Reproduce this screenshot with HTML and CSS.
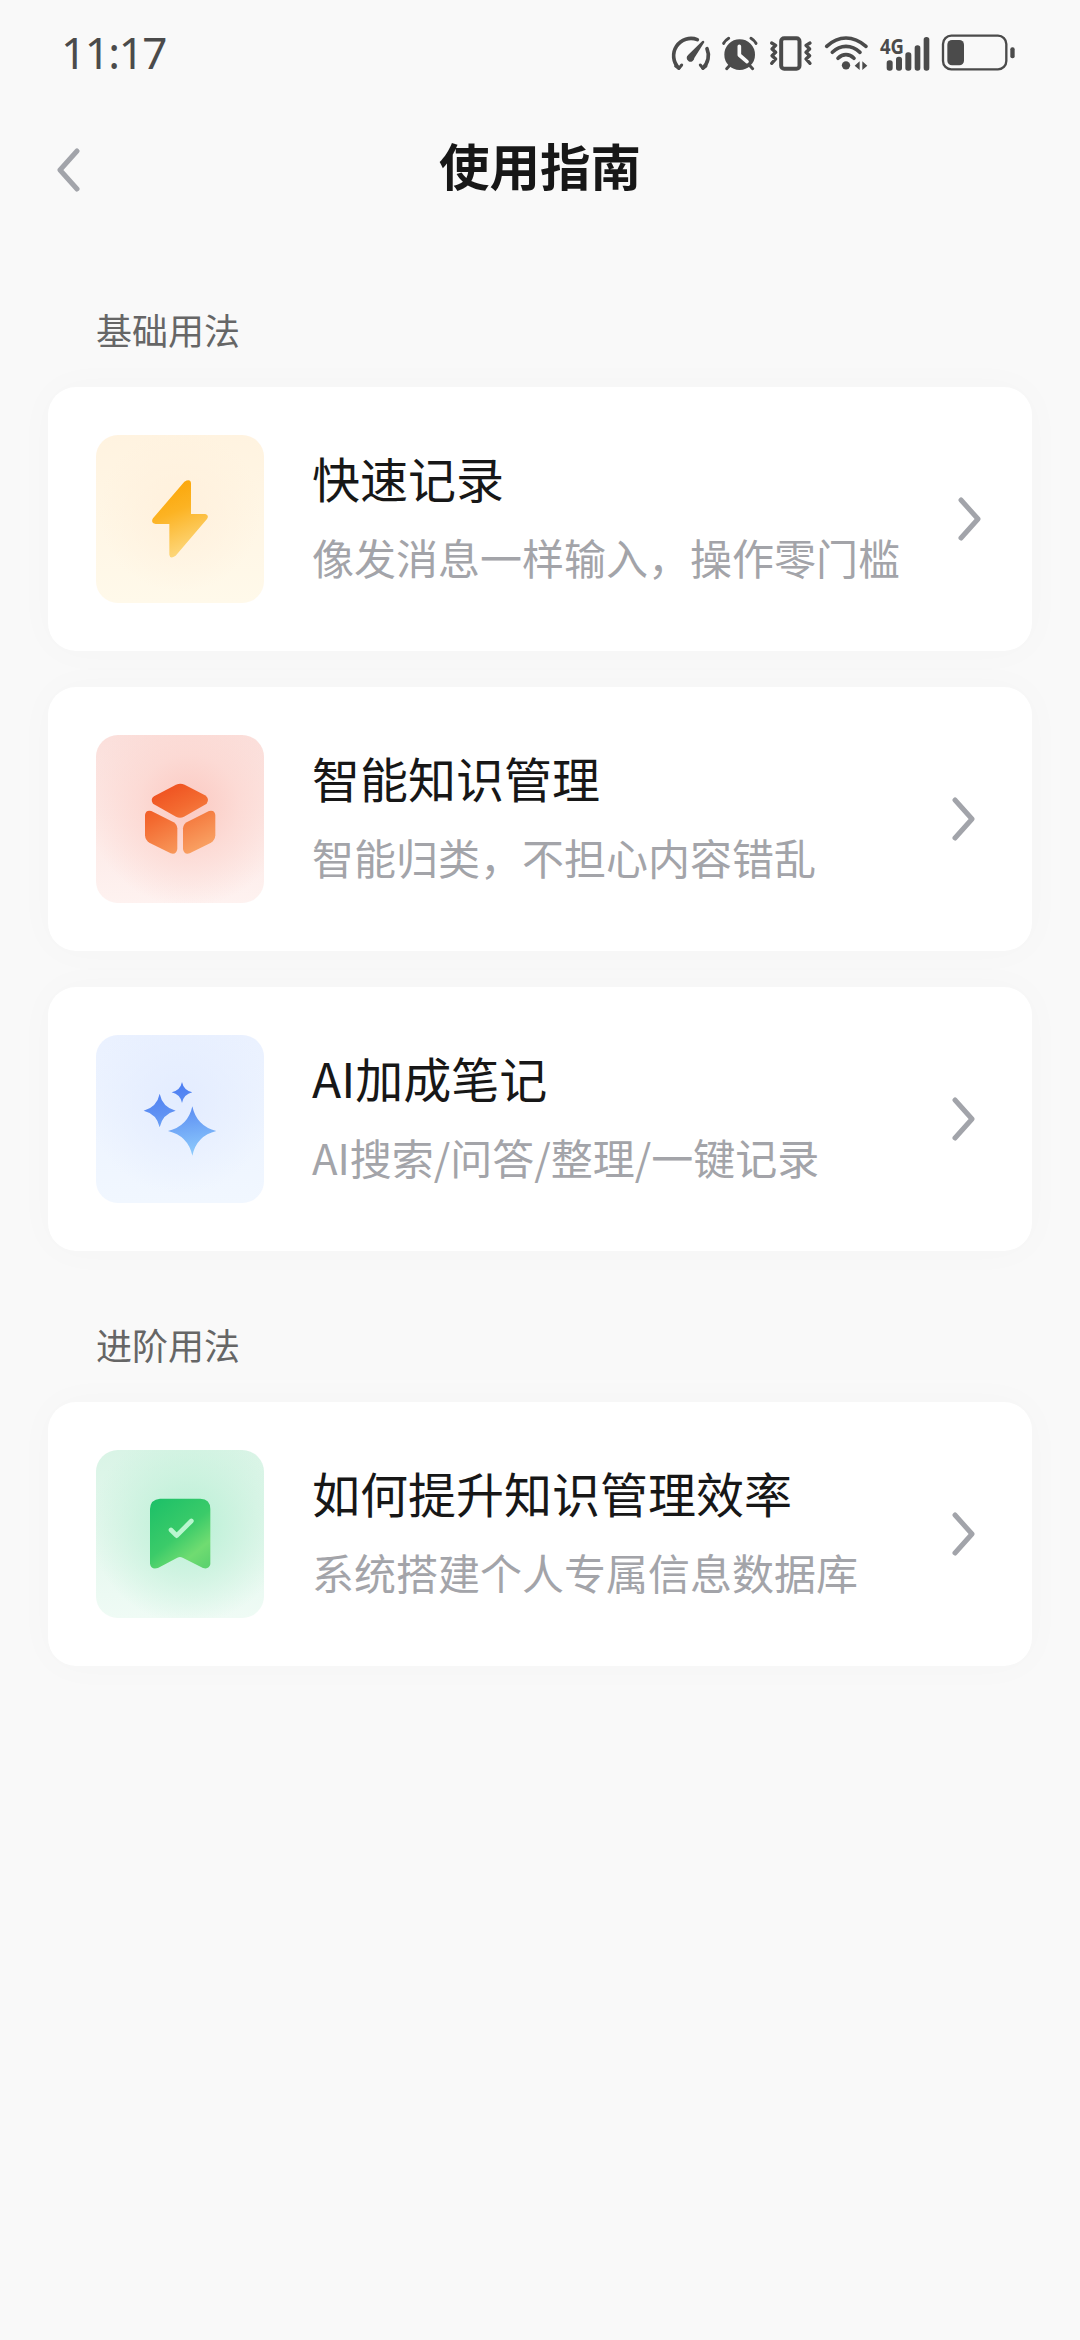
FILE: index.html
```html
<!DOCTYPE html>
<html lang="zh-CN">
<head>
<meta charset="utf-8">
<title>使用指南</title>
<link rel="stylesheet" href="styles.css">
</head>
<body>
<div class="status">
  <span class="time">11:17</span>
  <div class="status-icons">
    <svg class="i-gauge" viewBox="30 42 126 110" fill="none" stroke="#4b4b4b" stroke-width="11" stroke-linecap="round" stroke-linejoin="round">
      <path d="M56 141A52 52 0 0 1 112 56M141 83A52 52 0 0 1 129 141"/>
      <path d="M47 135L57 142L65 132M121 132L129 142L138 135" stroke-width="9"/>
      <path d="M127 60Q133 57 133 64L103 111A11.500 11.500 0 1 1 85 101Z" fill="#4b4b4b" stroke="none"/>
    </svg>
    <svg class="i-alarm" viewBox="184 42 112 110" fill="none" stroke="#4b4b4b" stroke-width="9" stroke-linecap="round">
      <circle cx="240" cy="101" r="46" fill="#4b4b4b" stroke="none"/>
      <path d="M192 67Q197 58 207 52M274 52Q284 58 289 67M201 143L212 131M279 143L268 131"/>
      <path d="M239 76V102L262 122" stroke="#fafafa" stroke-width="11" stroke-linejoin="round"/>
    </svg>
    <svg class="i-vibrate" viewBox="328 42 132 110" fill="none" stroke="#4b4b4b" stroke-width="10" stroke-linecap="round" stroke-linejoin="round">
      <rect x="364.500" y="51.500" width="55" height="92" rx="9" stroke-width="12"/>
      <path d="M336 66L348 73L337 84L348 94L337 104L348 114L336 127M451 66L439 73L450 84L439 94L450 104L439 114L451 127"/>
    </svg>
    <svg class="i-wifi" viewBox="492 40 134 110" fill="none" stroke="#4b4b4b" stroke-width="11" stroke-linecap="round">
      <path d="M500 74Q527 49 558 49T618 74M517 92Q535 74 558 74T600 92M534 110Q545 99 558 99T582 110"/>
      <circle cx="558" cy="131" r="12.500" fill="#4b4b4b" stroke="none"/>
      <path d="M584 132L599 119V145ZM607 119L622 132L607 145Z" fill="#4b4b4b" stroke="none"/>
    </svg>
    <svg class="i-signal" viewBox="88 38 156 110" fill="#4b4b4b">
      <text class="net" x="91" y="94" textLength="72" lengthAdjust="spacingAndGlyphs">4G</text>
      <rect x="111" y="114" width="18" height="31" rx="8"/>
      <rect x="139" y="103" width="18" height="42" rx="8"/>
      <rect x="167" y="90" width="18" height="55" rx="8"/>
      <rect x="195" y="69" width="17" height="76" rx="8"/>
      <rect x="222" y="44" width="17" height="101" rx="8"/>
    </svg>
    <svg class="i-battery" viewBox="274 38 224 112" fill="#4b4b4b">
      <rect x="280" y="43" width="190" height="101" rx="25" fill="none" stroke="#4b4b4b" stroke-width="7"/>
      <rect x="293" y="56" width="50" height="76" rx="14"/>
      <rect x="482" y="78" width="13" height="33" rx="6"/>
    </svg>
  </div>
</div>

<header class="nav">
  <svg class="back" viewBox="0 0 24 44"><path d="M21 3L4 22L21 41"/></svg>
  <h1>使用指南</h1>
</header>

<main>
  <h2>基础用法</h2>
  <section class="list">
    <div class="card card-wide">
      <svg class="tile tile-yellow" viewBox="168 435 504 504">
        <defs><linearGradient id="bolt" x1=".3" y1="0" x2=".6" y2="1"><stop offset="0" stop-color="#fba506"/><stop offset=".4" stop-color="#fcb323"/><stop offset="1" stop-color="#fddb85"/></linearGradient></defs>
        <path d="M433 575Q452 565 453 580V672H496Q508 675 501 687L407 797Q390 809 388 794V702H347Q331 698 339 685Z" fill="url(#bolt)"/>
      </svg>
      <div class="copy"><h3>快速记录</h3><p>像发消息一样输入，操作零门槛</p></div>
      <svg class="go" viewBox="0 0 24 44"><path d="M3 3L20 22L3 41"/></svg>
    </div>
    <div class="card">
      <svg class="tile tile-red" viewBox="48 45 504 504">
        <defs><linearGradient id="cube" gradientUnits="userSpaceOnUse" x1="250" y1="200" x2="350" y2="400"><stop offset="0" stop-color="#ef5120"/><stop offset=".35" stop-color="#f36a30"/><stop offset="1" stop-color="#f9a365"/></linearGradient></defs>
        <g fill="url(#cube)">
          <path d="M288 194Q301 188 314 194L375 226Q390 236 380 251L312 290Q300 296 288 290L219 251Q210 238 222 229Z"/>
          <path d="M195 285Q197 269 214 273L281 307Q291 313 292 325V387Q289 405 272 400L208 368Q196 361 195 346Z"/>
          <path d="M406 285Q404 269 387 273L320 307Q310 313 309 325V387Q312 405 329 400L393 368Q405 361 406 346Z"/>
        </g>
      </svg>
      <div class="copy"><h3>智能知识管理</h3><p>智能归类，不担心内容错乱</p></div>
      <svg class="go" viewBox="0 0 24 44"><path d="M3 3L20 22L3 41"/></svg>
    </div>
    <div class="card">
      <svg class="tile tile-blue" viewBox="48 45 504 504">
        <defs><linearGradient id="star" gradientUnits="userSpaceOnUse" x1="290" y1="190" x2="320" y2="405"><stop offset="0" stop-color="#4c7df2"/><stop offset=".4" stop-color="#6092f3"/><stop offset="1" stop-color="#8ccafc"/></linearGradient></defs>
        <g fill="url(#star)">
          <path d="M306 186Q311 211 337 217Q311 223 306 249Q301 223 275 217Q301 211 306 186Z"/>
          <path d="M239 221Q247 261 287 272Q247 282 239 322Q231 282 191 272Q231 261 239 221Z"/>
          <path d="M337 259Q350 319 409 333Q350 347 337 407Q324 347 264 333Q324 319 337 259Z"/>
        </g>
      </svg>
      <div class="copy"><h3>AI加成笔记</h3><p>AI搜索/问答/整理/一键记录</p></div>
      <svg class="go" viewBox="0 0 24 44"><path d="M3 3L20 22L3 41"/></svg>
    </div>
  </section>
  <h2>进阶用法</h2>
  <section class="list">
    <div class="card">
      <svg class="tile tile-green" viewBox="48 30 504 504">
        <defs><linearGradient id="mark" x1=".15" y1="0" x2=".85" y2="1"><stop offset="0" stop-color="#1fc168"/><stop offset=".5" stop-color="#3bcb69"/><stop offset=".8" stop-color="#70dc71"/><stop offset="1" stop-color="#5ed36e"/></linearGradient></defs>
        <path d="M240 176H361Q391 177 391 207V373Q387 389 369 384L308 353Q300 349 292 353L234 384Q213 390 210 371V207Q211 178 240 176Z" fill="url(#mark)"/>
        <path d="M273 270L290 287L334 243" fill="none" stroke="#b9f6cf" stroke-width="14" stroke-linecap="round" stroke-linejoin="round"/>
      </svg>
      <div class="copy"><h3>如何提升知识管理效率</h3><p>系统搭建个人专属信息数据库</p></div>
      <svg class="go" viewBox="0 0 24 44"><path d="M3 3L20 22L3 41"/></svg>
    </div>
  </section>
</main>
</body>
</html>
```
FILE: styles.css
```css
* { box-sizing: border-box; }
body {
  margin: 0;
  min-height: 2340px;
  background: #f9f9f9;
  color: #171717;
  font-family: "Noto Sans CJK SC", sans-serif;
}
h1, h2, h3, p { margin: 0; }
svg { display: block; flex: none; }

.status {
  height: 107px;
  display: flex;
  justify-content: space-between;
  align-items: center;
  padding: 0 64px 1px 61px;
}
.time {
  font: 400 44px/60px "Noto Sans", "Noto Sans CJK SC", sans-serif;
  color: #4b4b4b;
  letter-spacing: -1.5px;
  padding-bottom: 2px;
}
.status-icons { display: flex; align-items: center; }
.i-gauge { width: 42px; height: 36.67px; margin-right: 9.3px; }
.i-alarm { width: 37.33px; height: 36.67px; margin-right: 10.67px; }
.i-vibrate { width: 44px; height: 36.67px; margin-right: 10.67px; }
.i-wifi { width: 44.67px; height: 36.67px; margin-right: 10.67px; }
.i-signal { width: 52px; height: 36.67px; margin-right: 10px; overflow: visible; }
.i-battery { width: 74.67px; height: 37.33px; }
.net { font: 700 66px "Noto Sans", sans-serif; }

.nav {
  height: 126px;
  display: grid;
  grid-template-columns: 100px 1fr 100px;
  align-items: center;
  padding: 0 56px;
}
.nav h1 {
  text-align: center;
  font-size: 50.5px;
  line-height: 72px;
  font-weight: 700;
  padding-bottom: 12px;
}
.back { width: 24px; height: 44px; }
.back path, .go path {
  fill: none;
  stroke: #a2a4aa;
  stroke-width: 5px;
  stroke-linecap: round;
  stroke-linejoin: round;
}

main { padding: 68px 48px 0; }
h2 {
  font-size: 36px;
  line-height: 56px;
  font-weight: 400;
  color: #666;
  padding-left: 48px;
  margin-bottom: 30px;
}
.list { display: flex; flex-direction: column; gap: 36px; margin-bottom: 65px; }
.card {
  height: 264px;
  display: flex;
  align-items: center;
  padding: 0 56px 0 48px;
  background: #fff;
  border-radius: 28px;
  box-shadow: 0 0 40px rgba(0, 0, 0, .025);
}
.card-wide { padding-right: 50px; }
.tile { width: 168px; height: 168px; border-radius: 22px; }
.tile-yellow { background: radial-gradient(circle at 50% 45%, #fff0dc 0, rgba(255, 240, 218, 0) 65%), linear-gradient(#fff3e0, #fff9ea); }
.tile-red { background: radial-gradient(circle at 55% 42%, #fbc9c1 0, rgba(252, 215, 209, .75) 38%, rgba(253, 230, 226, 0) 75%), linear-gradient(#fbdfdb, #fef2f0); }
.tile-blue { background: radial-gradient(circle at 50% 40%, #e3ecff 0, rgba(228, 236, 255, 0) 70%), linear-gradient(#eaf1ff, #f1f7ff); }
.tile-green { background: radial-gradient(circle at 55% 45%, #b8f0d5 0, rgba(197, 241, 219, .7) 38%, rgba(225, 247, 235, 0) 75%), linear-gradient(#d9f4e6, #effbf5); }
.copy { flex: 1; padding: 0 0 5px 48px; white-space: nowrap; }
h3 { font-size: 48px; line-height: 80px; font-weight: 400; }
.copy p { font-size: 42px; line-height: 80px; color: #a3a4a9; }
.go { width: 24px; height: 44px; }
```
